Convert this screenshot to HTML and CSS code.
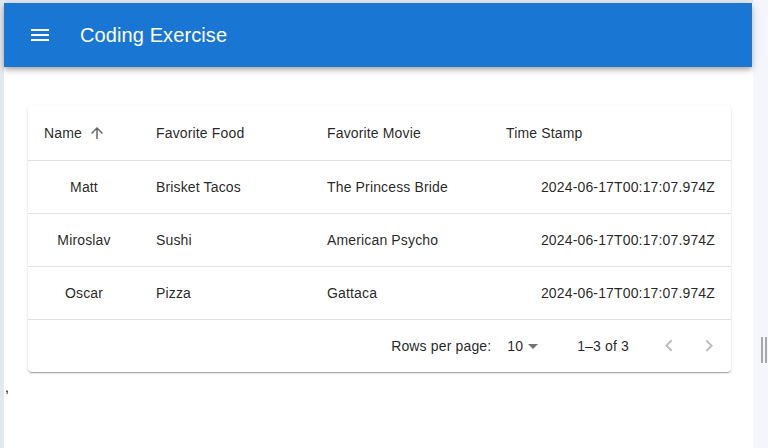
FILE: index.html
```html
<!DOCTYPE html>
<html lang="en">
<head>
<meta charset="utf-8">
<title>Coding Exercise</title>
<link rel="stylesheet" href="styles.css">
</head>
<body>
<div class="frame">
  <header class="appbar">
    <button class="menu-btn" aria-label="menu">
      <svg viewBox="0 0 24 24" width="24" height="24"><path fill="#fff" d="M3 18h18v-2H3v2zm0-5h18v-2H3v2zm0-7v2h18V6H3z"/></svg>
    </button>
    <h1 class="title">Coding Exercise</h1>
  </header>
  <main class="content">
    <section class="card">
      <table class="table">
        <colgroup>
          <col class="c1"><col class="c2"><col class="c3"><col class="c4">
        </colgroup>
        <thead>
          <tr>
            <th><span class="sort">Name<svg viewBox="0 0 24 24" width="18" height="18"><path fill="rgba(0,0,0,0.6)" d="M4 12l1.41 1.41L11 7.83V20h2V7.83l5.58 5.59L20 12l-8-8-8 8z"/></svg></span></th>
            <th>Favorite Food</th>
            <th>Favorite Movie</th>
            <th>Time Stamp</th>
          </tr>
        </thead>
        <tbody>
          <tr><td class="center">Matt</td><td>Brisket Tacos</td><td>The Princess Bride</td><td class="right">2024-06-17T00:17:07.974Z</td></tr>
          <tr><td class="center">Miroslav</td><td>Sushi</td><td>American Psycho</td><td class="right">2024-06-17T00:17:07.974Z</td></tr>
          <tr><td class="center">Oscar</td><td>Pizza</td><td>Gattaca</td><td class="right">2024-06-17T00:17:07.974Z</td></tr>
        </tbody>
      </table>
      <div class="pagination">
        <span class="label">Rows per page:</span>
        <span class="select">10<svg viewBox="0 0 24 24" width="24" height="24"><path fill="rgba(0,0,0,0.54)" d="M7 10l5 5 5-5z"/></svg></span>
        <span class="rows">1–3 of 3</span>
        <span class="actions">
          <button class="nav" aria-label="previous"><svg viewBox="0 0 24 24" width="24" height="24"><path fill="rgba(0,0,0,0.26)" d="M15.41 16.09l-4.58-4.59 4.58-4.59L14 5.5l-6 6 6 6z"/></svg></button>
          <button class="nav" aria-label="next"><svg viewBox="0 0 24 24" width="24" height="24"><path fill="rgba(0,0,0,0.26)" d="M8.59 16.34l4.58-4.59-4.58-4.59L10 5.75l6 6-6 6z"/></svg></button>
        </span>
      </div>
    </section>
    <div class="stray">,</div>
  </main>
</div>
<aside class="strip"><span class="handle"></span></aside>
</body>
</html>
```

FILE: styles.css
```css
html, body {
  margin: 0;
  height: 100%;
}
body {
  display: flex;
  background: #e4e8ef;
  font-family: "Liberation Sans", Arial, sans-serif;
  overflow: hidden;
}
.frame {
  flex: 1;
  margin-top: 3px;
  margin-left: 4px;
  background: #fff;
  display: flex;
  flex-direction: column;
  min-width: 0;
}
.appbar {
  height: 64px;
  margin-right: 1px;
  background: #1976d2;
  color: #fff;
  display: flex;
  align-items: center;
  padding: 0 24px;
  box-shadow: 0 2px 4px -1px rgba(0,0,0,0.2), 0 4px 5px 0 rgba(0,0,0,0.14), 0 1px 10px 0 rgba(0,0,0,0.12);
  position: relative;
  z-index: 1;
}
.menu-btn {
  background: none;
  border: 0;
  padding: 0;
  margin: 0 28px 0 0;
  width: 24px;
  height: 24px;
  display: flex;
}
.title {
  margin: 0;
  font-size: 20px;
  font-weight: 400;
  letter-spacing: 0.1px;
}
.content {
  padding: 39px 0 0 0;
}
.card {
  margin: 0 22px 0 24px;
  background: #fff;
  border-radius: 4px;
  box-shadow: 0 2px 1px -1px rgba(0,0,0,0.2), 0 1px 1px 0 rgba(0,0,0,0.14), 0 1px 3px 0 rgba(0,0,0,0.12);
  overflow: hidden;
}
.table {
  width: 100%;
  border-collapse: collapse;
  table-layout: fixed;
  font-size: 14px;
  letter-spacing: 0.15px;
  color: rgba(0,0,0,0.87);
}
.c1 { width: 112px; }
.c2 { width: 171px; }
.c3 { width: 179px; }
.table th, .table td {
  padding: 0 16px;
  border-bottom: 1px solid #e0e0e0;
  text-align: left;
  font-weight: 400;
  white-space: nowrap;
}
.table th { height: 54px; }
.table td { height: 52px; }
.table td.center { text-align: center; }
.table td.right { text-align: right; }
.sort {
  display: inline-flex;
  align-items: center;
  gap: 6px;
}
.pagination {
  height: 52px;
  display: flex;
  align-items: center;
  justify-content: flex-end;
  padding-right: 2px;
  font-size: 14px;
  letter-spacing: 0.15px;
  color: rgba(0,0,0,0.87);
}
.select {
  display: inline-flex;
  align-items: center;
  margin: 0 32px 0 8px;
  padding-left: 8px;
}
.select svg { margin-left: -2px; }
.actions {
  display: flex;
  margin-left: 20px;
}
.nav {
  width: 40px;
  height: 40px;
  padding: 8px;
  border: 0;
  background: none;
  display: flex;
}
.stray {
  font-size: 14px;
  line-height: 16px;
  margin-top: 7px;
  padding-left: 1px;
  color: #000;
}
.strip {
  width: 15px;
  background: #f4f6fb;
  display: flex;
  justify-content: flex-end;
  padding: 337px 1px 0 0;
  box-sizing: border-box;
}
.handle {
  width: 6px;
  height: 26px;
  border-left: 2px solid #a8a8a8;
  border-right: 2px solid #a8a8a8;
  box-sizing: border-box;
}
```
